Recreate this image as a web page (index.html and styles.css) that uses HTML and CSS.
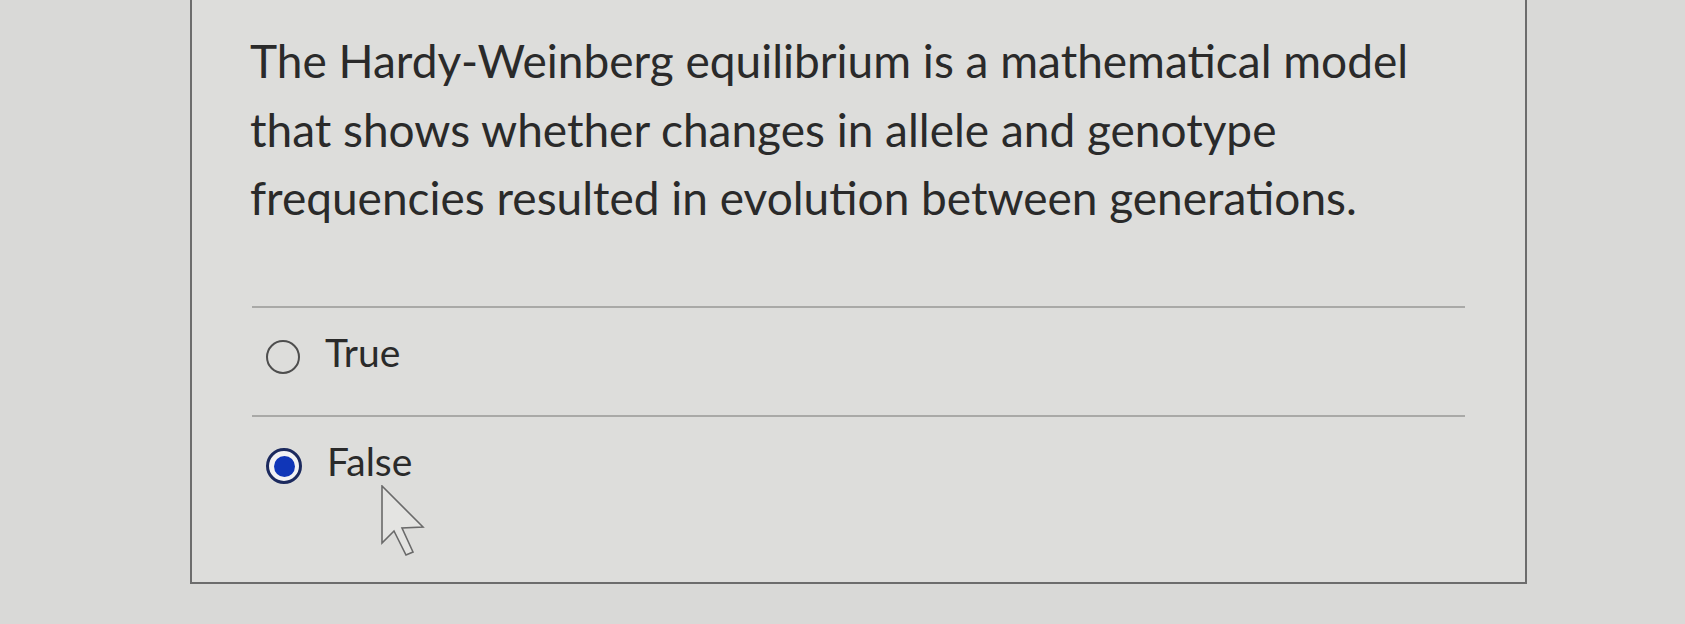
FILE: index.html
```html
<!DOCTYPE html>
<html lang="en">
<head>
<meta charset="utf-8">
<title>Quiz question</title>
<link rel="stylesheet" href="styles.css">
</head>
<body>
<div class="card">
  <p class="question">The Hardy-Weinberg equilibrium is a mathematical model that shows whether changes in allele and genotype frequencies resulted in evolution between generations.</p>
  <div class="answers">
    <label class="answer">
      <span class="radio"></span>
      <span class="answer-text">True</span>
    </label>
    <label class="answer">
      <span class="radio radio-checked"><span class="radio-dot"></span></span>
      <span class="answer-text">False</span>
    </label>
  </div>
</div>
<svg class="cursor" width="46" height="72" viewBox="0 0 46 72" xmlns="http://www.w3.org/2000/svg">
  <path d="M1 1 L1 58 L13 46 L25 70 L32 67 L21 43 L42 42 Z" fill="#e4e4e2" stroke="#6a6a6a" stroke-width="1.6" stroke-linejoin="miter"/>
</svg>
</body>
</html>
```
FILE: styles.css
```css
html, body {
  margin: 0;
  padding: 0;
}
body {
  background: #d9d9d7;
  font-family: Lato, "Open Sans", sans-serif;
  color: #2b2b2b;
  height: 624px;
  overflow: hidden;
  position: relative;
}
.card {
  box-sizing: border-box;
  width: 1337px;
  margin: -20px 0 0 190px;
  border: 2px solid #6c6c6c;
  background: #dddddb;
  padding: 45px 60px 58px 58px;
}
.question {
  margin: 0 0 73px 0;
  font-size: 46px;
  line-height: 68.5px;
  color: #2a2a2a;
}
.answers {
  display: flex;
  flex-direction: column;
}
.answer {
  display: flex;
  align-items: center;
  gap: 25px;
  border-top: 2px solid #a9a9a7;
  padding: 21px 0 39px 14px;
  margin-left: 2px;
}
.answer-text {
  font-size: 39px;
  line-height: 47px;
  color: #2a2a2a;
}
.radio {
  box-sizing: border-box;
  width: 34px;
  height: 34px;
  border-radius: 50%;
  border: 2.5px solid #4e4e4e;
  margin-top: 10px;
  flex: none;
  display: flex;
  align-items: center;
  justify-content: center;
}
.radio-checked {
  width: 36px;
  height: 36px;
  border: 3px solid #1c2a5e;
  background: #f2f2f4;
}
.radio-dot {
  width: 21px;
  height: 21px;
  border-radius: 50%;
  background: #1036b8;
}
.cursor {
  position: absolute;
  left: 381px;
  top: 485px;
}
```
